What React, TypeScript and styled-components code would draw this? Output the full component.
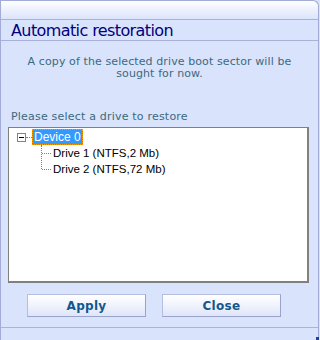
import React from "react";
import styled, { createGlobalStyle } from "styled-components";

const GlobalStyle = createGlobalStyle`
  html, body {
    margin: 0;
    padding: 0;
    background: #d9e3fb;
  }
`;

const Window = styled.div`
  box-sizing: border-box;
  width: 319px;
  height: 340px;
  background: #d9e3fb;
  border-left: 1px solid #a3acd6;
  border-right: 1px solid #a3acd6;
  border-top: 1px solid #a3acd6;
  border-top-right-radius: 6px;
  display: flex;
  flex-direction: column;
  font-family: "DejaVu Sans", Verdana, sans-serif;
`;

const TopBand = styled.div`
  height: 18px;
  background: linear-gradient(to bottom, #ffffff 0%, #eef2fd 45%, #dbe4fb 100%);
  border-top-right-radius: 6px;
  border-bottom: 1px solid #a9b1d8;
`;

const TitleBar = styled.div`
  height: 20px;
  padding-left: 10px;
  display: flex;
  align-items: center;
  border-bottom: 1px solid #a9b1d8;
  color: #000080;
  font-size: 16px;
  letter-spacing: -0.6px;
`;

const Description = styled.p`
  margin: 15px 0 0;
  text-align: center;
  color: #3b6a80;
  font-size: 11px;
  line-height: 12px;
  letter-spacing: 0.1px;
`;

const Label = styled.div`
  margin: 30px 0 0 10px;
  color: #3b6a80;
  font-size: 11px;
  letter-spacing: 0.2px;
  line-height: 13px;
`;

const TreeBox = styled.div`
  box-sizing: border-box;
  margin: 4px 0 0 7px;
  width: 301px;
  height: 156px;
  background: #ffffff;
  border: 1px solid #808080;
  border-right-width: 2px;
  border-bottom-width: 2px;
  padding: 1px 0 0 8px;
  font-family: "Liberation Sans", Arial, sans-serif;
  font-size: 11px;
`;

const TreeRow = styled.div<{ $indent: number }>`
  height: 16px;
  display: flex;
  align-items: center;
  padding-left: ${(p) => p.$indent}px;
`;

const Toggle = styled.span`
  box-sizing: border-box;
  width: 9px;
  height: 9px;
  border: 1px solid #848284;
  background: #ffffff;
  position: relative;
  flex: none;

  &::after {
    content: "";
    position: absolute;
    left: 1px;
    top: 3px;
    width: 5px;
    height: 1px;
    background: #000000;
  }
`;

const HLine = styled.span<{ $w: number }>`
  width: ${(p) => p.$w}px;
  height: 0;
  border-top: 1px dotted #808080;
  flex: none;
`;

const VLine = styled.span<{ $h: number }>`
  position: absolute;
  left: 0;
  top: 0;
  height: ${(p) => p.$h}px;
  border-left: 1px dotted #808080;
`;

const NodeText = styled.span<{ $selected?: boolean }>`
  padding: 0 2px;
  height: 16px;
  line-height: 16px;
  color: ${(p) => (p.$selected ? "#ffffff" : "#000000")};
  background: ${(p) => (p.$selected ? "#3399ff" : "transparent")};
  outline: ${(p) => (p.$selected ? "1px dotted #ff9900" : "none")};
  outline-offset: -1px;
  font-size: ${(p) => (p.$selected ? "12px" : "11.5px")};
`;

const ChildWrap = styled.div`
  position: relative;
  margin-left: 24px;
`;

const ButtonRow = styled.div`
  display: flex;
  gap: 16px;
  margin: 11px 0 0 26px;
`;

const Button = styled.button`
  box-sizing: border-box;
  width: 119px;
  height: 23px;
  background: linear-gradient(to bottom, #ffffff 0%, #f0f3fd 50%, #dfe5f8 100%);
  border: 1px solid #b6bedf;
  border-right-color: #9aa3cc;
  border-bottom-color: #9aa3cc;
  color: #11588e;
  font-family: "DejaVu Sans", Verdana, sans-serif;
  font-weight: bold;
  font-size: 12px;
  letter-spacing: 0.3px;
  padding: 0;
`;

const Footer = styled.div`
  margin-top: 10px;
  border-top: 1px solid #aab2d8;
  flex: 1;
  position: relative;
`;

const Grip = styled.span`
  position: absolute;
  right: -1px;
  bottom: 0;
  width: 3px;
  height: 3px;
  background: #1f3f9a;
`;

export default function App() {
  return (
    <>
      <GlobalStyle />
      <Window>
        <TopBand />
        <TitleBar>Automatic restoration</TitleBar>
        <Description>
          A copy of the selected drive boot sector will be
          <br />
          sought for now.
        </Description>
        <Label>Please select a drive to restore</Label>
        <TreeBox>
          <TreeRow $indent={0}>
            <Toggle />
            <HLine $w={6} />
            <NodeText $selected>Device 0</NodeText>
          </TreeRow>
          <ChildWrap>
            <VLine $h={24} />
            <TreeRow $indent={1}>
              <HLine $w={9} />
              <NodeText>Drive 1 (NTFS,2 Mb)</NodeText>
            </TreeRow>
            <TreeRow $indent={1}>
              <HLine $w={9} />
              <NodeText>Drive 2 (NTFS,72 Mb)</NodeText>
            </TreeRow>
          </ChildWrap>
        </TreeBox>
        <ButtonRow>
          <Button>Apply</Button>
          <Button>Close</Button>
        </ButtonRow>
        <Footer>
          <Grip />
        </Footer>
      </Window>
    </>
  );
}
